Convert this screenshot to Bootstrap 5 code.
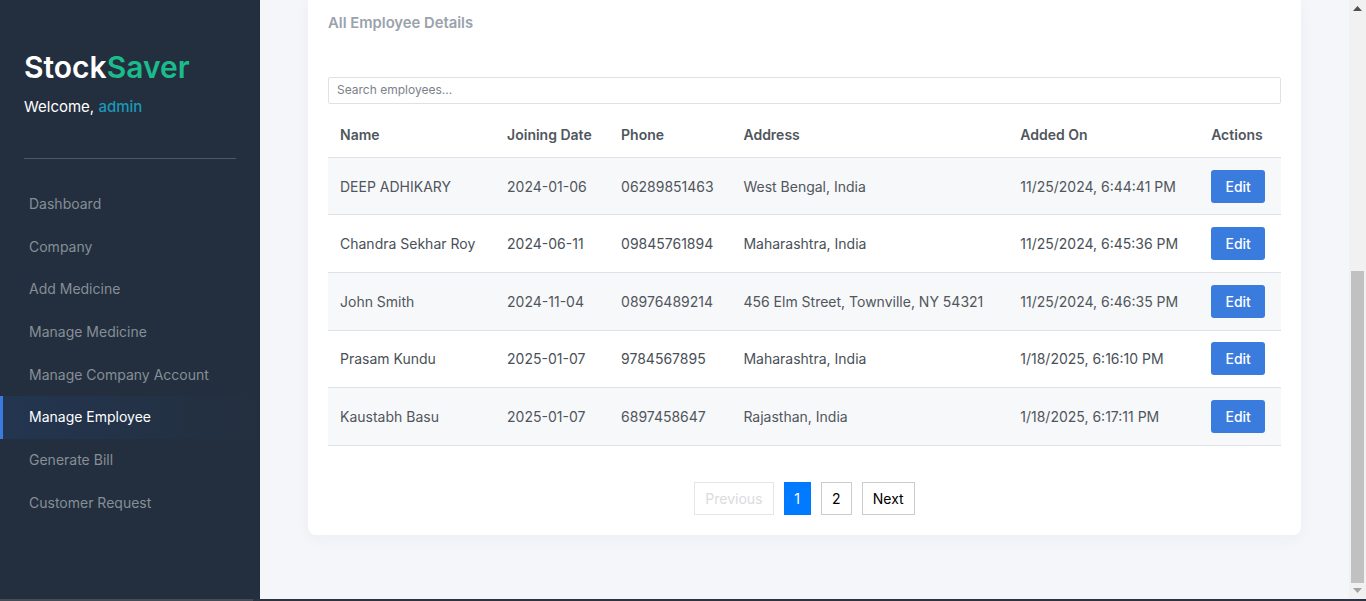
<!DOCTYPE html>
<html lang="en">
<head>
<meta charset="utf-8">
<title>StockSaver</title>
<link href="https://cdn.jsdelivr.net/npm/bootstrap@5.3.0/dist/css/bootstrap.min.css" rel="stylesheet">
<style>
html,body{height:100%;margin:0;overflow:hidden}
body{font-family:Inter,"Liberation Sans",sans-serif;background:#f4f6fa;color:#495057}
.shell{height:601px;position:relative}
.side{width:260px;flex:none;background:#232f3e;padding-top:48px}
.brand{font-size:30px;line-height:38px;font-weight:600;color:#fff;margin:0 0 0 24px}
.brand span{color:#1abc8c}
.welcome{font-size:15px;line-height:22px;color:#fff;margin:10px 0 0 24px}
.welcome span{color:#1a98b8;font-weight:500}
.rule{height:1px;background:#4f5965;margin:40px 24px 24px}
.menu a{display:block;height:42.7px;line-height:42.7px;padding-left:29px;font-size:14px;color:#868e97;text-decoration:none;font-weight:400}
.menu a.on{color:#fff;background:linear-gradient(90deg,#233550,#232f3e);box-shadow:inset 3px 0 0 #3a7bde}
.body-area{flex:1;min-width:0;padding:0 48px}
.sheet{background:#fff;border-radius:0 0 8px 8px;box-shadow:0 4px 16px rgba(30,40,70,.04);height:535px;padding:14px 20px 0}
.sheet-title{font-size:14.8px;line-height:18px;font-weight:600;color:#9aa2ac;margin:0 0 45px}
.finder{height:27px;border:1px solid #dee2e6;border-radius:2px;font-size:12px;padding:0 8px 2px;color:#495057;box-shadow:none}
.finder::placeholder{color:#7b828a}
.staff{margin:13px 0 0;font-size:14px;color:#495057;--bs-table-striped-bg:#f7f8fa;--bs-table-striped-color:#50565c;--bs-table-color:#50565c;border-color:#dee2e6}
.staff th{font-weight:600;font-size:14px;line-height:20px;padding:7px 12px 11px;height:40.3px;vertical-align:middle;border-bottom:1px solid #dee2e6;color:#50565c;white-space:nowrap}
.staff td{padding:0 12px;height:57.6px;vertical-align:middle;white-space:nowrap;border-bottom:1px solid #dee2e6}
.edit-btn{background:#3a7bde;border:0;color:#fff;font-size:14px;font-weight:500;width:54px;height:33px;padding:0;border-radius:3px}
.pager{margin-top:36px;gap:10px}
.pager button{height:33px;background:#fff;border:1px solid #ccc;font-size:14px;color:#000;padding:0 10.2px;border-radius:0}
.pager button.cur{background:#007bff;border-color:#007bff;color:#fff;width:27px;padding:0}
.pager button:disabled{border-color:#e6e6e6;color:#d9dbde}
.sbar{width:17px;flex:none;background:#f1f1f1;position:relative}
.sbar i{position:absolute;left:2px;width:13px;background:#c1c1c1;top:271px;height:312px}
.sbar svg{position:absolute;left:4px;width:9px;height:5px}
.baseline{position:absolute;left:0;right:0;bottom:0;height:2px;background:linear-gradient(90deg,#454b54 253px,#2b3440 253px)}
</style>
</head>
<body>
<div class="shell d-flex">
  <aside class="side">
    <h1 class="brand">Stock<span>Saver</span></h1>
    <p class="welcome">Welcome, <span>admin</span></p>
    <div class="rule"></div>
    <nav class="menu">
      <a href="#">Dashboard</a>
      <a href="#">Company</a>
      <a href="#">Add Medicine</a>
      <a href="#">Manage Medicine</a>
      <a href="#">Manage Company Account</a>
      <a href="#" class="on">Manage Employee</a>
      <a href="#">Generate Bill</a>
      <a href="#">Customer Request</a>
    </nav>
  </aside>
  <main class="body-area">
    <section class="sheet">
      <h2 class="sheet-title">All Employee Details</h2>
      <input class="form-control finder" type="text" placeholder="Search employees...">
      <table class="table table-striped staff">
        <thead>
          <tr><th>Name</th><th>Joining Date</th><th>Phone</th><th>Address</th><th>Added On</th><th>Actions</th></tr>
        </thead>
        <tbody>
          <tr><td>DEEP ADHIKARY</td><td>2024-01-06</td><td>06289851463</td><td>West Bengal, India</td><td>11/25/2024, 6:44:41 PM</td><td><button class="btn edit-btn">Edit</button></td></tr>
          <tr><td>Chandra Sekhar Roy</td><td>2024-06-11</td><td>09845761894</td><td>Maharashtra, India</td><td>11/25/2024, 6:45:36 PM</td><td><button class="btn edit-btn">Edit</button></td></tr>
          <tr><td>John Smith</td><td>2024-11-04</td><td>08976489214</td><td>456 Elm Street, Townville, NY 54321</td><td>11/25/2024, 6:46:35 PM</td><td><button class="btn edit-btn">Edit</button></td></tr>
          <tr><td>Prasam Kundu</td><td>2025-01-07</td><td>9784567895</td><td>Maharashtra, India</td><td>1/18/2025, 6:16:10 PM</td><td><button class="btn edit-btn">Edit</button></td></tr>
          <tr><td>Kaustabh Basu</td><td>2025-01-07</td><td>6897458647</td><td>Rajasthan, India</td><td>1/18/2025, 6:17:11 PM</td><td><button class="btn edit-btn">Edit</button></td></tr>
        </tbody>
      </table>
      <div class="pager d-flex justify-content-center">
        <button disabled>Previous</button>
        <button class="cur">1</button>
        <button>2</button>
        <button>Next</button>
      </div>
    </section>
  </main>
  <div class="sbar">
    <svg style="top:6px" viewBox="0 0 9 5"><path d="M4.5 0 9 5H0z" fill="#505050"/></svg>
    <i></i>
    <svg style="top:588px" viewBox="0 0 9 5"><path d="M0 0h9L4.5 5z" fill="#a3a3a3"/></svg>
  </div>
  <div class="baseline"></div>
</div>
<script src="https://cdn.jsdelivr.net/npm/bootstrap@5.3.0/dist/js/bootstrap.bundle.min.js"></script>
</body>
</html>
